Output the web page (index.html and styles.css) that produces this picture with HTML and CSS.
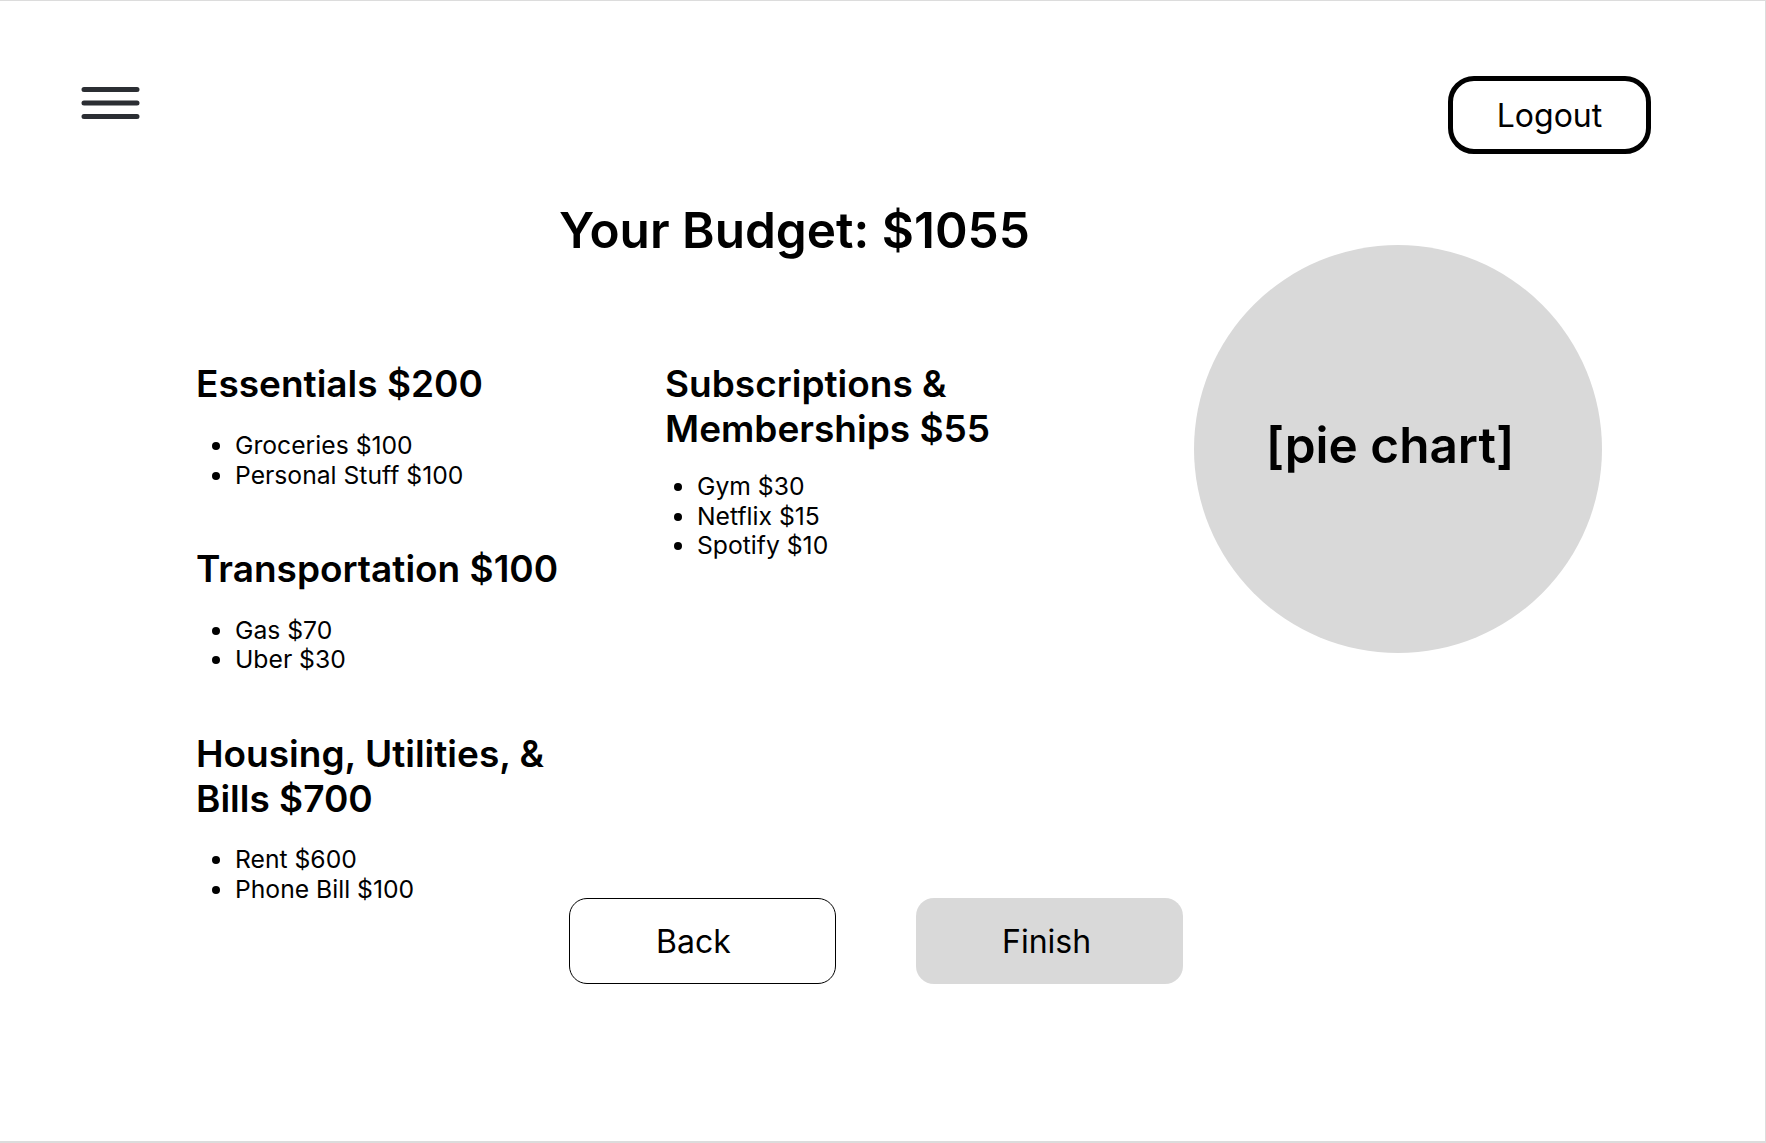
FILE: index.html
```html
<!DOCTYPE html>
<html lang="en">
<head>
    <meta charset="UTF-8">
    <meta name="viewport" content="width=device-width, initial-scale=1.0">
    <title>Your Budget</title>
    <link rel="stylesheet" href="styles.css">
</head>
<body>
    <div class="frame">
        <!-- Top bar -->
        <header class="topbar">
            <button class="menu-btn" aria-label="Menu">
                <svg width="60" height="34" viewBox="0 0 60 34">
                    <path d="M3 3.5H56M3 17H56M3 30.5H56" stroke="#2b2e33" stroke-width="5" stroke-linecap="round"/>
                </svg>
            </button>
            <button class="logout-btn">Logout</button>
        </header>

        <main class="budget">
            <section class="summary">
                <h1 class="budget-title">Your Budget: $1055</h1>

                <div class="categories">
                    <div class="category-col">
                        <div class="category">
                            <h2>Essentials $200</h2>
                            <ul>
                                <li>Groceries $100</li>
                                <li>Personal Stuff $100</li>
                            </ul>
                        </div>
                        <div class="category">
                            <h2>Transportation $100</h2>
                            <ul>
                                <li>Gas $70</li>
                                <li>Uber $30</li>
                            </ul>
                        </div>
                        <div class="category">
                            <h2>Housing, Utilities, &amp;<br>Bills $700</h2>
                            <ul>
                                <li>Rent $600</li>
                                <li>Phone Bill $100</li>
                            </ul>
                        </div>
                    </div>
                    <div class="category-col">
                        <div class="category narrow">
                            <h2>Subscriptions &amp;<br>Memberships $55</h2>
                            <ul>
                                <li>Gym $30</li>
                                <li>Netflix $15</li>
                                <li>Spotify $10</li>
                            </ul>
                        </div>
                    </div>
                </div>

                <div class="actions">
                    <button class="back-btn">Back</button>
                    <button class="finish-btn">Finish</button>
                </div>
            </section>

            <aside class="chart">
                <div class="pie">[pie chart]</div>
            </aside>
        </main>
    </div>
</body>
</html>
```

FILE: styles.css
```css
body {
    margin: 0;
    font-family: Inter, "Noto Sans", sans-serif;
    color: #000;
    background: #fff;
}
button {
    font-family: inherit;
    cursor: pointer;
}
.frame {
    box-sizing: border-box;
    width: 1766px;
    height: 1143px;
    border: 1px solid #dcdcdc;
    border-left: none;
    border-bottom-width: 2px;
    overflow: hidden;
}

/* top bar */
.topbar {
    display: flex;
    justify-content: space-between;
    align-items: flex-start;
    padding: 75px 114px 0 81px;
    height: 79px;
}
.menu-btn {
    background: none;
    border: none;
    padding: 0;
    margin-top: 10px;
    display: block;
}
.menu-btn svg {
    display: block;
}
.logout-btn {
    box-sizing: border-box;
    width: 203px;
    height: 78px;
    border: 5px solid #000;
    border-radius: 26px;
    background: #fff;
    font-size: 32px;
    color: #000;
    padding: 0;
}

/* main area */
.budget {
    display: flex;
    padding: 0 163px 0 199px;
}
.summary {
    flex: 1;
}
.budget-title {
    margin: 46px 0 0 360px;
    font-size: 49.5px;
    line-height: 58px;
    font-weight: 600;
}
.categories {
    display: grid;
    grid-template-columns: 469px auto;
    margin-top: 102px;
}
.category + .category {
    margin-top: 56px;
}
.category h2 {
    margin: 0 0 24.5px -3px;
    font-size: 37px;
    line-height: 45px;
    font-weight: 600;
}
.category:first-child h2 {
    margin-bottom: 25px;
}
.category.narrow h2 {
    margin-bottom: 21px;
}
.category ul {
    margin: 0;
    padding-left: 36px;
}
.category.narrow ul {
    padding-left: 29px;
}
.category li {
    font-size: 24.7px;
    line-height: 29.5px;
}

.actions {
    display: flex;
    gap: 80px;
    margin: -6px 0 0 370px;
}
.back-btn, .finish-btn {
    box-sizing: border-box;
    width: 267px;
    height: 86px;
    border-radius: 18px;
    font-size: 32px;
    color: #000;
    text-align: left;
    padding: 0 0 0 86px;
}
.back-btn {
    background: #fff;
    border: 1.5px solid #000;
}
.finish-btn {
    background: #d9d9d9;
    border: none;
}

/* pie chart placeholder */
.chart {
    margin-top: 90px;
}
.pie {
    width: 408px;
    height: 408px;
    border-radius: 50%;
    background: #d9d9d9;
    display: flex;
    align-items: center;
    justify-content: center;
    font-size: 49.5px;
    font-weight: 600;
    padding: 0 16px 9px 0;
    box-sizing: border-box;
}
```
